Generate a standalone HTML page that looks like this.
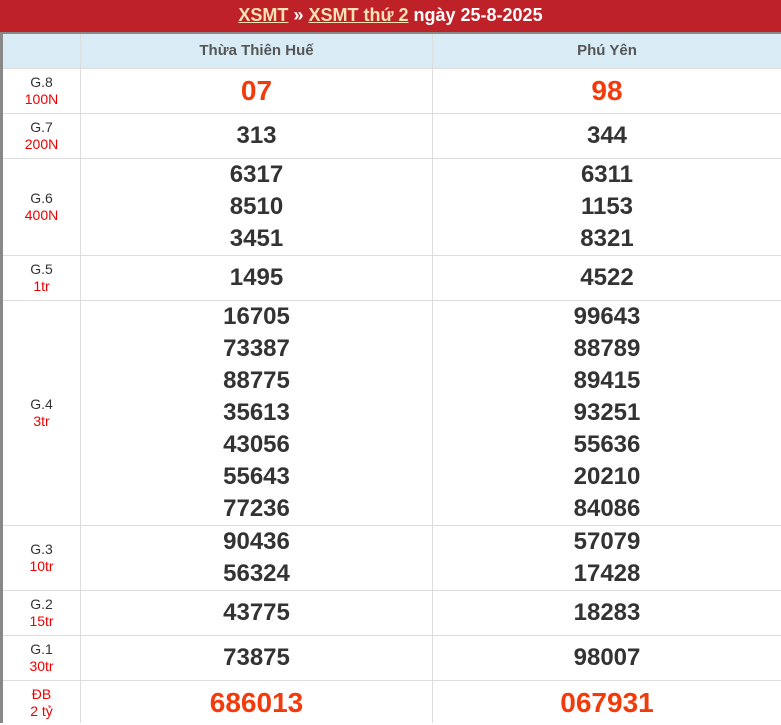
<!DOCTYPE html>
<html><head><meta charset="utf-8"><style>
*{margin:0;padding:0;box-sizing:border-box}
body{width:781px;height:723px;overflow:hidden;background:#fff;font-family:"Liberation Sans",Arial,sans-serif;position:relative}
.hd{position:absolute;left:0;top:0;width:781px;height:32px;background:#be2127;color:#fff;text-align:center;font-weight:bold;font-size:18px;line-height:30px}
.hd u{color:#fde3b3}
.lb{position:absolute;left:0;top:32px;width:3px;height:691px;background:#888}
.tb{position:absolute;left:0;top:32px;width:781px;height:2px;background:#888}
.th{position:absolute;top:34px;height:34px;background:#d9ecf6;color:#555;font-weight:bold;font-size:15px;text-align:center;line-height:34px}
.hl{position:absolute;left:3px;width:778px;height:1px;background:#ddd}
.vl{position:absolute;top:34px;width:1px;height:689px;background:#ddd}
.c{position:absolute;display:flex;flex-direction:column;justify-content:center;align-items:center;text-align:center}
.lab{left:3px;width:77px;font-size:14px;color:#333;line-height:17px}
.lab span{color:#e00}
.n{font-size:24px;font-weight:bold;color:#333;line-height:32px}
.r{color:#f33a0a;font-size:28px}
.a{left:81px;width:351px}.b{left:433px;width:348px}
</style></head><body>
<div class="hd"><u>XSMT</u> » <u>XSMT thứ 2</u> ngày 25-8-2025</div>
<div class="tb"></div><div class="lb"></div>
<div class="th" style="left:3px;width:77px"></div>
<div class="th" style="left:81px;width:351px">Thừa Thiên Huế</div>
<div class="th" style="left:433px;width:348px">Phú Yên</div>
<div class="vl" style="left:80px"></div><div class="vl" style="left:432px"></div>
<div class="hl" style="top:68px"></div><div class="hl" style="top:113px"></div><div class="hl" style="top:158px"></div><div class="hl" style="top:255px"></div><div class="hl" style="top:300px"></div><div class="hl" style="top:525px"></div><div class="hl" style="top:590px"></div><div class="hl" style="top:635px"></div><div class="hl" style="top:680px"></div>

<div class="c lab" style="top:69px;height:44px">G.8<span>100N</span></div>
<div class="c n r a" style="top:69px;height:44px">07</div>
<div class="c n r b" style="top:69px;height:44px">98</div>

<div class="c lab" style="top:114px;height:44px">G.7<span>200N</span></div>
<div class="c n a" style="top:114px;height:44px">313</div>
<div class="c n b" style="top:114px;height:44px">344</div>

<div class="c lab" style="top:159px;height:96px">G.6<span>400N</span></div>
<div class="c n a" style="top:159px;height:96px"><div>6317</div><div>8510</div><div>3451</div></div>
<div class="c n b" style="top:159px;height:96px"><div>6311</div><div>1153</div><div>8321</div></div>

<div class="c lab" style="top:256px;height:44px">G.5<span>1tr</span></div>
<div class="c n a" style="top:256px;height:44px">1495</div>
<div class="c n b" style="top:256px;height:44px">4522</div>

<div class="c lab" style="top:301px;height:224px">G.4<span>3tr</span></div>
<div class="c n a" style="top:301px;height:224px"><div>16705</div><div>73387</div><div>88775</div><div>35613</div><div>43056</div><div>55643</div><div>77236</div></div>
<div class="c n b" style="top:301px;height:224px"><div>99643</div><div>88789</div><div>89415</div><div>93251</div><div>55636</div><div>20210</div><div>84086</div></div>

<div class="c lab" style="top:526px;height:64px">G.3<span>10tr</span></div>
<div class="c n a" style="top:526px;height:64px"><div>90436</div><div>56324</div></div>
<div class="c n b" style="top:526px;height:64px"><div>57079</div><div>17428</div></div>

<div class="c lab" style="top:591px;height:44px">G.2<span>15tr</span></div>
<div class="c n a" style="top:591px;height:44px">43775</div>
<div class="c n b" style="top:591px;height:44px">18283</div>

<div class="c lab" style="top:636px;height:44px">G.1<span>30tr</span></div>
<div class="c n a" style="top:636px;height:44px">73875</div>
<div class="c n b" style="top:636px;height:44px">98007</div>

<div class="c lab" style="top:681px;height:44px"><span>ĐB</span><span>2 tỷ</span></div>
<div class="c n r a" style="top:681px;height:44px">686013</div>
<div class="c n r b" style="top:681px;height:44px">067931</div>
</body></html>
